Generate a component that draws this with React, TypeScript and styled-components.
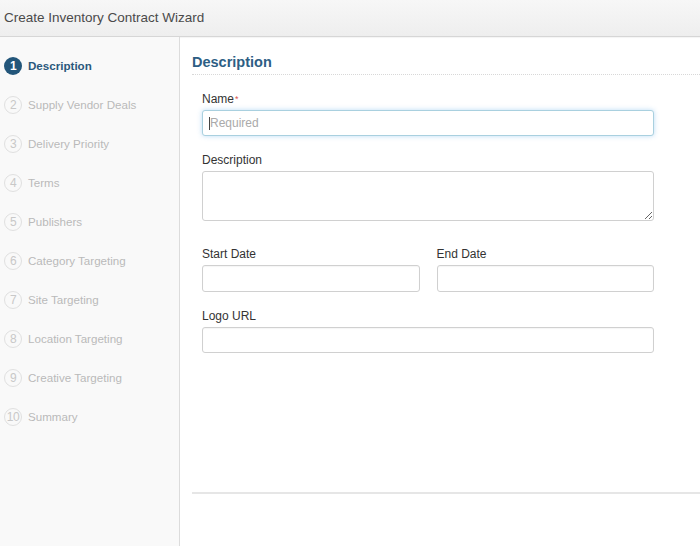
import React from "react";
import styled, { createGlobalStyle } from "styled-components";

const Global = createGlobalStyle`
  html, body { margin: 0; padding: 0; background: #fff; }
  body { font-family: "Liberation Sans", Arial, sans-serif; }
  * { box-sizing: border-box; }
`;

const Page = styled.div`
  width: 700px;
  height: 546px;
  display: flex;
  flex-direction: column;
  overflow: hidden;
`;

const Header = styled.header`
  height: 37px;
  flex: none;
  display: flex;
  align-items: center;
  padding: 0 4px 2px;
  background: linear-gradient(#f7f7f7, #eeeeee);
  border-bottom: 1px solid #d6d6d6;
  box-shadow: 0 1px 1px rgba(0, 0, 0, 0.04);
`;

const Title = styled.h1`
  margin: 0;
  font-size: 13.5px;
  font-weight: normal;
  color: #4a4a4a;
`;

const Body = styled.div`
  flex: 1;
  display: flex;
  min-height: 0;
`;

const Sidebar = styled.nav`
  width: 180px;
  flex: none;
  background: #f9f9f9;
  border-right: 1px solid #dcdcdc;
  padding-top: 9px;
  display: flex;
  flex-direction: column;
`;

const Step = styled.div<{ $active?: boolean }>`
  height: 39px;
  display: flex;
  align-items: center;
  padding-left: 4px;
  gap: 6px;
  font-size: 11.6px;
  color: ${(p) => (p.$active ? "#2a587c" : "#bababa")};
  font-weight: ${(p) => (p.$active ? "bold" : "normal")};
`;

const Circle = styled.span<{ $active?: boolean }>`
  width: 18px;
  height: 18px;
  border-radius: 50%;
  flex: none;
  display: flex;
  align-items: center;
  justify-content: center;
  font-size: 12px;
  font-weight: ${(p) => (p.$active ? "bold" : "normal")};
  color: ${(p) => (p.$active ? "#fff" : "#c8c8c8")};
  background: ${(p) => (p.$active ? "#23567a" : "transparent")};
  border: ${(p) => (p.$active ? "none" : "1.5px solid #e0e0e0")};
  letter-spacing: -0.5px;
`;

const Main = styled.main`
  flex: 1;
  display: flex;
  flex-direction: column;
  padding-left: 12px;
`;

const Content = styled.div`
  flex: 1;
  padding-top: 15px;
`;

const Heading = styled.h2`
  margin: 0;
  font-size: 14.5px;
  line-height: 20px;
  font-weight: bold;
  color: #2d5e84;
  padding-bottom: 2px;
  border-bottom: 1px dotted #d8d8d8;
`;

const Form = styled.div`
  width: 462px;
  padding: 17px 0 0 10px;
  display: flex;
  flex-direction: column;
`;

const Row = styled.div`
  display: grid;
  grid-template-columns: 1fr 1fr;
  column-gap: 17px;
`;

const Field = styled.div<{ $after?: number }>`
  display: flex;
  flex-direction: column;
  margin-bottom: ${(p) => p.$after ?? 17}px;
`;

const Label = styled.label`
  font-size: 12px;
  line-height: 14px;
  color: #333;
  margin-bottom: 4px;
`;

const Req = styled.span`
  color: #d9534f;
  font-size: 9px;
  vertical-align: top;
  margin-left: 1px;
`;

const InputWrap = styled.div`
  position: relative;
`;

const Input = styled.input<{ $focused?: boolean; $h?: number }>`
  display: block;
  width: 100%;
  height: ${(p) => p.$h ?? 26}px;
  padding: 0 7px;
  font-family: inherit;
  font-size: 12px;
  color: #333;
  border-radius: 3px;
  outline: none;
  background: #fff;
  border: 1px solid ${(p) => (p.$focused ? "#a9d0df" : "#d0d0d0")};
  box-shadow: ${(p) =>
    p.$focused
      ? "0 0 5px rgba(102, 175, 233, 0.45)"
      : "inset 0 1px 1px rgba(0,0,0,0.04)"};
  &::placeholder { color: #aaa; }
`;

const Caret = styled.span`
  position: absolute;
  left: 7px;
  top: 7px;
  width: 1px;
  height: 13px;
  background: #444;
`;

const TextArea = styled.textarea`
  display: block;
  width: 100%;
  height: 50px;
  padding: 5px 7px;
  font-family: inherit;
  font-size: 12px;
  border: 1px solid #d0d0d0;
  border-radius: 3px;
  outline: none;
  resize: vertical;
`;

const Footer = styled.footer`
  height: 54px;
  flex: none;
  border-top: 2px solid #e6e6e6;
`;

const steps = [
  "Description",
  "Supply Vendor Deals",
  "Delivery Priority",
  "Terms",
  "Publishers",
  "Category Targeting",
  "Site Targeting",
  "Location Targeting",
  "Creative Targeting",
  "Summary",
];

export default function App() {
  return (
    <Page>
      <Global />
      <Header>
        <Title>Create Inventory Contract Wizard</Title>
      </Header>
      <Body>
        <Sidebar>
          {steps.map((s, i) => (
            <Step key={s} $active={i === 0}>
              <Circle $active={i === 0}>{i + 1}</Circle>
              {s}
            </Step>
          ))}
        </Sidebar>
        <Main>
          <Content>
            <Heading>Description</Heading>
            <Form>
              <Field>
                <Label>
                  Name<Req>*</Req>
                </Label>
                <InputWrap>
                  <Input $focused placeholder="Required" />
                  <Caret />
                </InputWrap>
              </Field>
              <Field $after={26}>
                <Label>Description</Label>
                <TextArea />
              </Field>
              <Row>
                <Field $after={17}>
                  <Label>Start Date</Label>
                  <Input $h={27} />
                </Field>
                <Field $after={17}>
                  <Label>End Date</Label>
                  <Input $h={27} />
                </Field>
              </Row>
              <Field>
                <Label>Logo URL</Label>
                <Input />
              </Field>
            </Form>
          </Content>
          <Footer />
        </Main>
      </Body>
    </Page>
  );
}
